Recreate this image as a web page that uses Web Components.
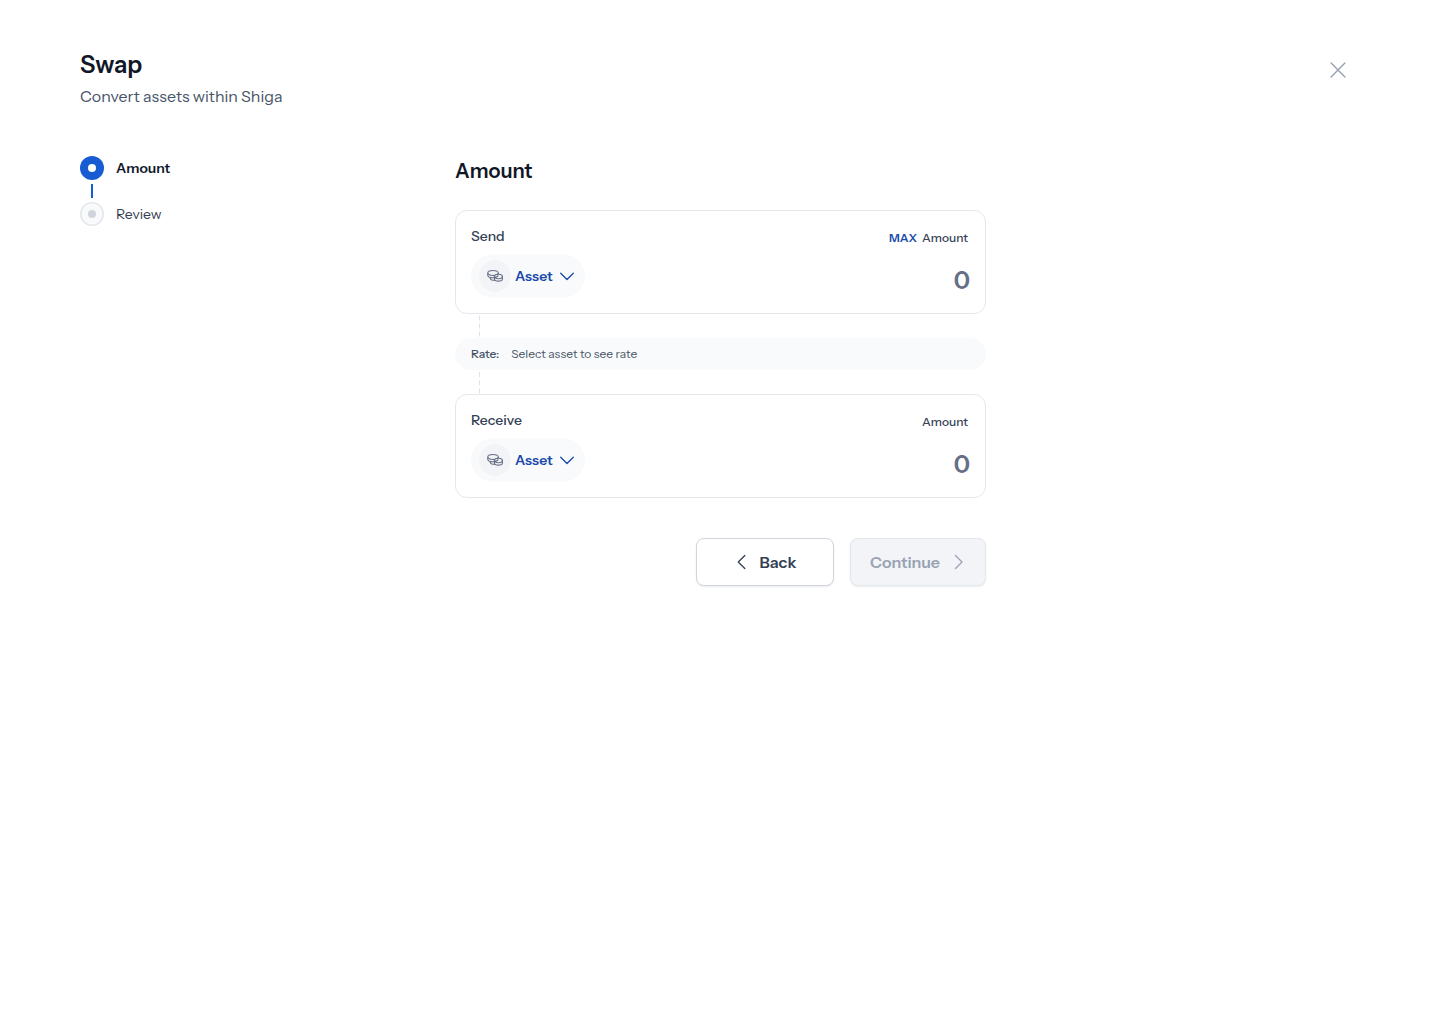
<!DOCTYPE html>
<html lang="en">
<head>
<meta charset="utf-8">
<title>Swap</title>
<style>
  body {
    margin: 0;
    background: #fff;
    font-family: "Instrument Sans", Inter, "Liberation Sans", sans-serif;
  }
</style>
</head>
<body>
<swap-page>
  <page-header slot="header">
    Swap
    <span slot="subtitle">Convert assets within Shiga</span>
  </page-header>
  <step-list slot="steps">
    <step-item active>Amount</step-item>
    <step-item>Review</step-item>
  </step-list>
  <swap-form></swap-form>
</swap-page>

<script>
class BaseElement extends HTMLElement {
  constructor() {
    super();
    const template = document.createElement("template");
    template.innerHTML = this.constructor.markup;
    this.attachShadow({ mode: "open" });
    this.shadowRoot.appendChild(template.content.cloneNode(true));
  }
}

class SwapPage extends BaseElement {
  static markup = `
<style>
  :host {
    display: block;
    box-sizing: border-box;
    min-height: 1024px;
    padding: 48px 80px;
  }

  .body {
    display: grid;
    grid-template-columns: 375px 531px;
    margin-top: 48px;
  }
</style>
<slot name="header"></slot>
<div class="body">
  <slot name="steps"></slot>
  <slot></slot>
</div>`;
}

class PageHeader extends BaseElement {
  static markup = `
<style>
  :host {
    display: flex;
    justify-content: space-between;
    align-items: flex-start;
  }

  h1 {
    margin: 0 0 4px;
    font-size: 24px;
    line-height: 32px;
    font-weight: 600;
    color: #101828;
    transform: translateY(0.5px);
  }

  p {
    margin: 0;
    font-size: 16px;
    line-height: 24px;
    color: #475467;
  }

  button {
    width: 44px;
    height: 44px;
    padding: 10px;
    border: 0;
    background: none;
    color: #98a2b3;
  }

  svg {
    display: block;
  }
</style>
<div>
  <h1><slot></slot></h1>
  <p><slot name="subtitle"></slot></p>
</div>
<button aria-label="Close">
  <svg width="24" height="24" viewBox="0 0 24 24" fill="none" stroke="currentColor" stroke-width="1.4" stroke-linecap="round">
    <path d="M5.1 5.1l13.8 13.8M18.900 5.100L5.100 18.900"/>
  </svg>
</button>`;
}

class StepList extends BaseElement {
  static markup = `
<style>
  :host {
    display: flex;
    flex-direction: column;
    gap: 4px;
  }
</style>
<slot></slot>`;
}

class StepItem extends BaseElement {
  static markup = `
<style>
  :host {
    display: grid;
    grid-template-columns: 24px auto;
    column-gap: 12px;
    row-gap: 4px;
    justify-content: start;
    font-size: 14px;
    line-height: 24px;
    color: #344054;
  }

  .dot {
    display: flex;
    align-items: center;
    justify-content: center;
    box-sizing: border-box;
    width: 24px;
    height: 24px;
    border-radius: 50%;
    background: #f9fafb;
    box-shadow: inset 0 0 0 1.5px #e4e7ec;
  }

  .dot::before {
    content: "";
    width: 8px;
    height: 8px;
    border-radius: 50%;
    background: #d0d5dd;
  }

  .line {
    display: none;
    width: 2px;
    height: 14px;
    justify-self: center;
    background: #175cd3;
  }

  :host([active]) {
    font-weight: 600;
    color: #101828;
  }

  :host([active]) .dot {
    background: #175cd3;
    box-shadow: none;
  }

  :host([active]) .dot::before {
    background: #fff;
  }

  :host([active]) .line {
    display: block;
  }
</style>
<span class="dot"></span>
<slot></slot>
<span class="line"></span>`;
}

class AssetPicker extends BaseElement {
  static markup = `
<style>
  :host {
    display: flex;
    align-items: center;
    box-sizing: border-box;
    width: 114px;
    height: 44px;
    padding: 0 8px;
    border-radius: 22px;
    background: #f9fafb;
    font-size: 14px;
    line-height: 20px;
    font-weight: 600;
    color: #1849a9;
  }

  .coin {
    display: flex;
    align-items: center;
    justify-content: center;
    width: 32px;
    height: 32px;
    margin-right: 4px;
    border-radius: 50%;
    background: #f2f4f7;
    color: #667085;
  }

  .chevron {
    margin-left: auto;
  }
</style>
<span class="coin">
  <svg width="16" height="16" viewBox="0 0 16 16" fill="none" stroke="currentColor" stroke-width="1.1">
    <ellipse cx="6" cy="5" rx="5.200" ry="2.500"/>
    <path d="M.8 5v2.200c0 1.400 2.300 2.500 5.200 2.500 3 0 5.200-1.100 5.200-2.500V5M3.200 9.400v.5c0 1.400 2 2.400 4.800 2.400"/>
    <path d="M7.400 8.500v2.400c0 1.200 1.800 2.200 4 2.200s4-1 4-2.200V8.500c0-1.200-1.800-2.200-4-2.200s-4 1-4 2.200z" fill="#f2f4f7"/>
    <path d="M7.400 8.500c0 1.200 1.800 2.200 4 2.200s4-1 4-2.200M7.200 9.300c2 0 3.500-.5 4-1.800"/>
  </svg>
</span>
<slot></slot>
<svg class="chevron" width="20" height="20" viewBox="0 0 20 20" fill="none" stroke="currentColor" stroke-width="1.300" stroke-linecap="round" stroke-linejoin="round">
  <path d="M3.700 7.200l6.300 6.300 6.300-6.300"/>
</svg>`;
}

class AmountCard extends BaseElement {
  static markup = `
<style>
  :host {
    display: flex;
    justify-content: space-between;
    box-sizing: border-box;
    height: 104px;
    padding: 15px;
    border: 1px solid #e4e7ec;
    border-radius: 12px;
    background: #fff;
    color: #344054;
  }

  .label {
    margin-bottom: 8px;
    font-size: 14px;
    line-height: 20px;
    font-weight: 500;
  }

  .right {
    display: flex;
    flex-direction: column;
    align-items: flex-end;
  }

  .caption {
    display: flex;
    gap: 5px;
    margin: 2px 2px 0 0;
    font-size: 12px;
    line-height: 20px;
    font-weight: 500;
  }

  ::slotted([slot="max"]) {
    font-weight: 600;
    color: #1849a9;
  }

  .value {
    margin-top: 16px;
    font-size: 24px;
    line-height: 32px;
    font-weight: 600;
    color: #667085;
    transform: translateY(0.5px);
  }
</style>
<div>
  <div class="label"><slot name="label"></slot></div>
  <asset-picker>Asset</asset-picker>
</div>
<div class="right">
  <div class="caption"><slot name="max"></slot><span>Amount</span></div>
  <div class="value"><slot></slot></div>
</div>`;
}

class RateBar extends BaseElement {
  static markup = `
<style>
  :host {
    display: block;
    font-size: 12px;
    line-height: 32px;
    color: #475467;
  }

  .dashes {
    display: block;
    width: 1px;
    height: 24px;
    margin-left: 24px;
    color: #dfe2e8;
  }

  .bar {
    display: flex;
    gap: 12px;
    height: 32px;
    padding: 0 16px;
    border-radius: 16px;
    background: #f9fafb;
  }

  .bar span {
    font-weight: 500;
  }
</style>
<svg class="dashes" viewBox="0 0 1 24"><path d="M.5 1.500V22.500" stroke="currentColor" stroke-dasharray="5 3"/></svg>
<div class="bar"><span>Rate:</span><div><slot></slot></div></div>
<svg class="dashes" viewBox="0 0 1 24"><path d="M.5 2V24" stroke="currentColor" stroke-dasharray="5 3.200"/></svg>`;
}

class FormButton extends BaseElement {
  static markup = `
<style>
  :host {
    display: flex;
    align-items: center;
    justify-content: center;
    gap: 8px;
    box-sizing: border-box;
    width: 138px;
    height: 48px;
    padding-right: 2px;
    border: 1px solid #d0d5dd;
    border-radius: 8px;
    background: #fff;
    box-shadow: 0 1px 2px rgba(16, 24, 40, 0.08);
    font-size: 16px;
    line-height: 24px;
    font-weight: 600;
    color: #344054;
  }

  :host([disabled]) {
    width: 136px;
    padding: 0 0 0 2px;
    border-color: #e4e7ec;
    background: #f2f4f7;
    color: #98a2b3;
  }
</style>
<slot name="before"></slot>
<span><slot></slot></span>
<slot name="after"></slot>`;
}

class SwapForm extends BaseElement {
  static markup = `
<style>
  :host {
    display: block;
  }

  h2 {
    margin: 0 0 24px;
    font-size: 20px;
    line-height: 30px;
    font-weight: 600;
    color: #101828;
  }

  .actions {
    display: flex;
    justify-content: flex-end;
    gap: 16px;
    margin-top: 40px;
  }

  svg {
    display: block;
    fill: none;
    stroke: currentColor;
    stroke-width: 1.3;
    stroke-linecap: round;
    stroke-linejoin: round;
  }
</style>
<h2>Amount</h2>
<amount-card>
  <span slot="label">Send</span>
  <span slot="max">MAX</span>
  0
</amount-card>
<rate-bar>Select asset to see rate</rate-bar>
<amount-card>
  <span slot="label">Receive</span>
  0
</amount-card>
<div class="actions">
  <form-button>
    <svg slot="before" width="20" height="20" viewBox="0 0 20 20"><path d="M12.800 3.500L6.300 10l6.500 6.500"/></svg>
    Back
  </form-button>
  <form-button disabled>
    Continue
    <svg slot="after" width="20" height="20" viewBox="0 0 20 20"><path d="M7.500 3.500L14 10l-6.500 6.500"/></svg>
  </form-button>
</div>`;
}

window.customElements.define("swap-page", SwapPage);
window.customElements.define("page-header", PageHeader);
window.customElements.define("step-list", StepList);
window.customElements.define("step-item", StepItem);
window.customElements.define("asset-picker", AssetPicker);
window.customElements.define("amount-card", AmountCard);
window.customElements.define("rate-bar", RateBar);
window.customElements.define("form-button", FormButton);
window.customElements.define("swap-form", SwapForm);
</script>
</body>
</html>
